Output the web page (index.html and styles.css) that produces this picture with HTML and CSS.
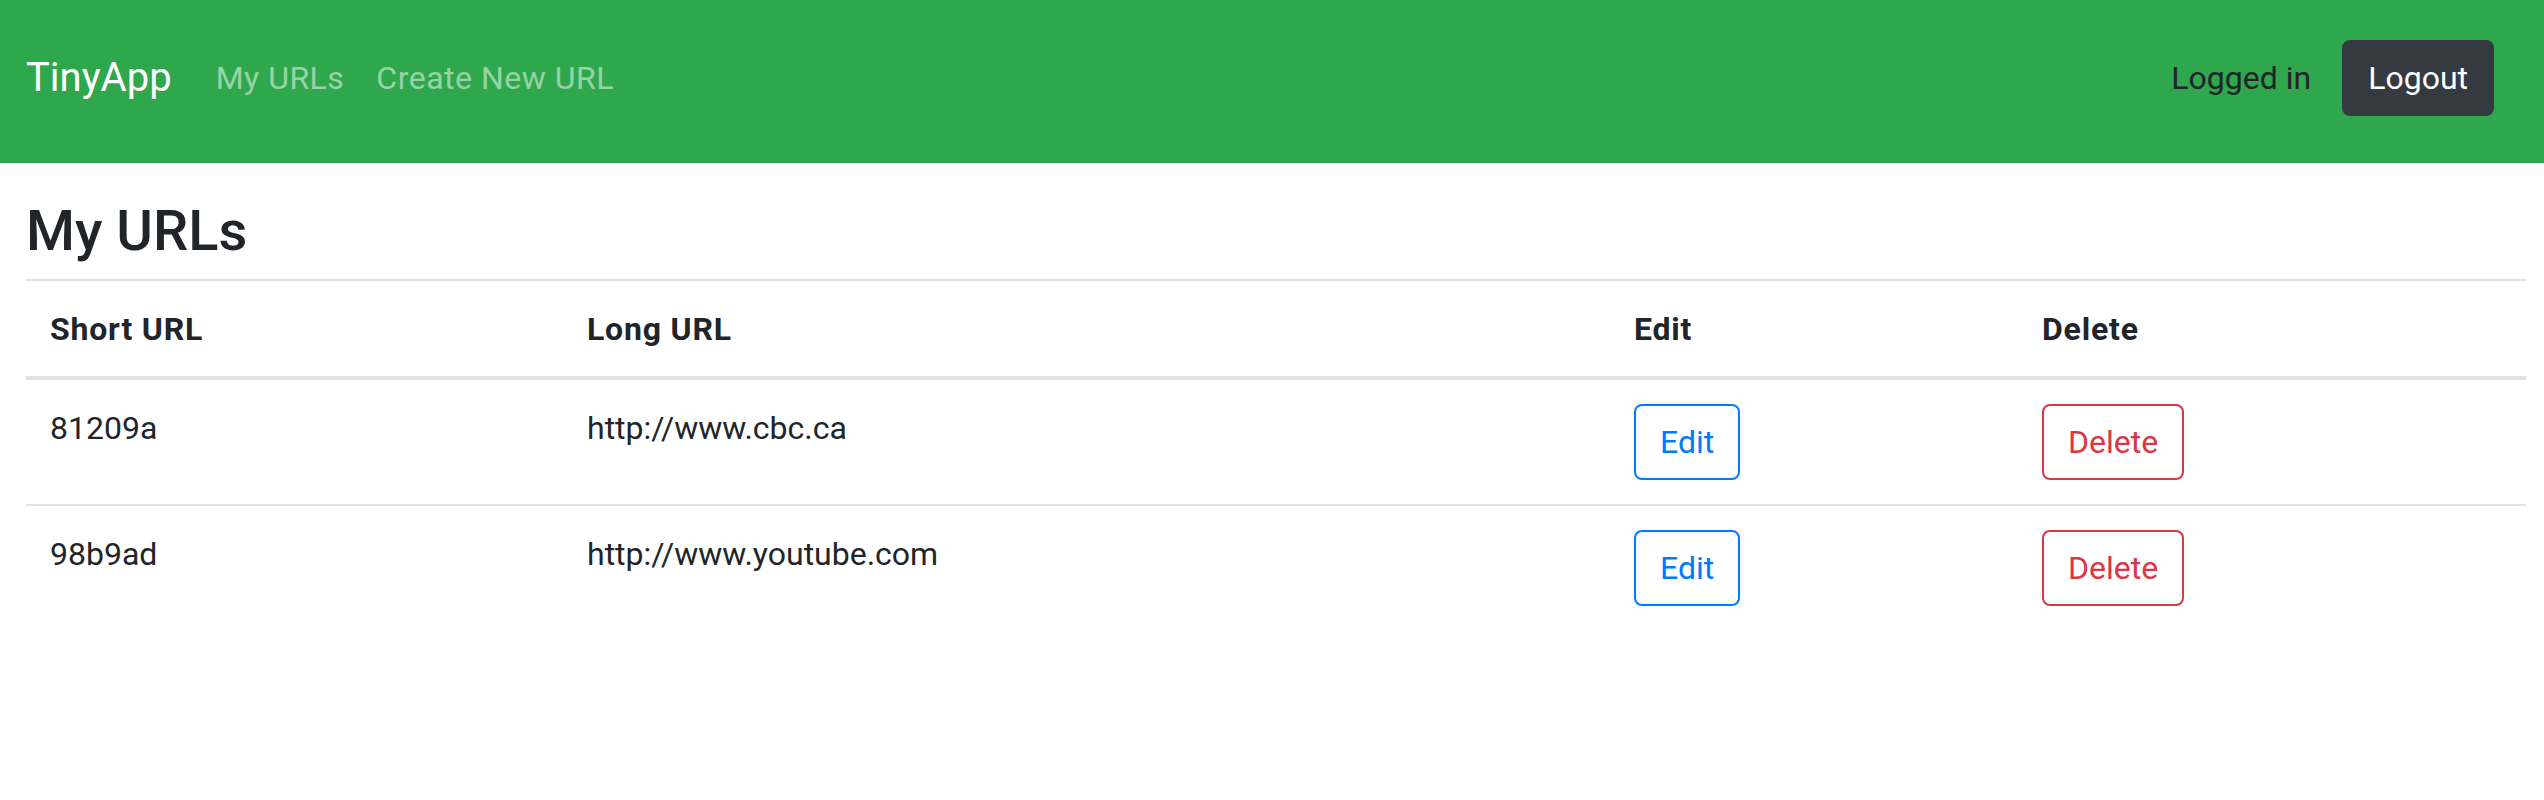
FILE: index.html
```html
<!DOCTYPE html>
<html lang="en">
<head>
<meta charset="utf-8">
<title>TinyApp - My URLs</title>
<link rel="stylesheet" href="styles.css">
</head>
<body>
<nav class="navbar">
  <a class="brand" href="#">TinyApp</a>
  <div class="nav-links">
    <a class="nav-link" href="#">My URLs</a>
    <a class="nav-link" href="#">Create New URL</a>
  </div>
  <div class="nav-right">
    <span class="nav-text">Logged in</span>
    <button class="btn btn-dark" type="button">Logout</button>
  </div>
</nav>
<main class="page">
  <h3 class="title">My URLs</h3>
  <table class="table">
    <colgroup>
      <col class="col-short">
      <col class="col-long">
      <col class="col-edit">
      <col class="col-delete">
    </colgroup>
    <thead>
      <tr>
        <th>Short URL</th>
        <th>Long URL</th>
        <th>Edit</th>
        <th>Delete</th>
      </tr>
    </thead>
    <tbody>
      <tr>
        <td>81209a</td>
        <td>http://www.cbc.ca</td>
        <td><a class="btn btn-outline-primary" href="#">Edit</a></td>
        <td><button class="btn btn-outline-danger" type="button">Delete</button></td>
      </tr>
      <tr>
        <td>98b9ad</td>
        <td>http://www.youtube.com</td>
        <td><a class="btn btn-outline-primary" href="#">Edit</a></td>
        <td><button class="btn btn-outline-danger" type="button">Delete</button></td>
      </tr>
    </tbody>
  </table>
</main>
</body>
</html>
```
FILE: styles.css
```css
* {
  box-sizing: border-box;
}

html, body {
  margin: 0;
  background: #ffffff;
}

body {
  font-family: Roboto, "Liberation Sans", Arial, sans-serif;
  font-size: 32px;
  line-height: 1.5;
  color: #212529;
}

a {
  text-decoration: none;
}

/* Navbar */
.navbar {
  display: flex;
  align-items: center;
  height: 163px;
  padding: 40px 50px 47px 26px;
  background: #2fa74c;
}

.brand {
  font-size: 40px;
  line-height: 60px;
  color: #ffffff;
  margin-right: 28px;
  white-space: nowrap;
}

.nav-links {
  display: flex;
  align-items: center;
  flex: 1;
}

.nav-link {
  padding: 0 16px;
  line-height: 48px;
  letter-spacing: 0.5px;
  color: rgba(255, 255, 255, 0.5);
  white-space: nowrap;
}

.nav-right {
  display: flex;
  align-items: center;
}

.nav-text {
  color: #212529;
  line-height: 48px;
  margin-right: 31px;
}

/* Buttons */
.btn {
  display: inline-block;
  vertical-align: top;
  font-family: inherit;
  font-size: 32px;
  line-height: 48px;
  padding: 12px 24px;
  border: 2px solid transparent;
  border-radius: 8px;
  background: transparent;
  cursor: pointer;
  white-space: nowrap;
}

.btn-dark {
  background: #343a40;
  border-color: #343a40;
  color: #ffffff;
}

.btn-outline-primary {
  color: #007bff;
  border-color: #007bff;
}

.btn-outline-danger {
  color: #dc3545;
  border-color: #dc3545;
}

/* Page */
.page {
  padding: 34px 18px 0 26px;
}

.title {
  margin: 0 0 14px;
  font-size: 56px;
  font-weight: 500;
  line-height: 68px;
}

.table {
  width: 100%;
  table-layout: fixed;
  border-collapse: collapse;
}

.col-short { width: 537px; }
.col-long { width: 1047px; }
.col-edit { width: 408px; }
.col-delete { width: auto; }

.table th,
.table td {
  padding: 24px;
  text-align: left;
  vertical-align: top;
  border-top: 2px solid #dee2e6;
}

.table thead th {
  font-weight: 700;
  letter-spacing: 0.8px;
  padding-bottom: 23px;
  border-bottom: 4px solid #dee2e6;
}

.table tbody tr:first-child td {
  border-top: 0;
}
```
